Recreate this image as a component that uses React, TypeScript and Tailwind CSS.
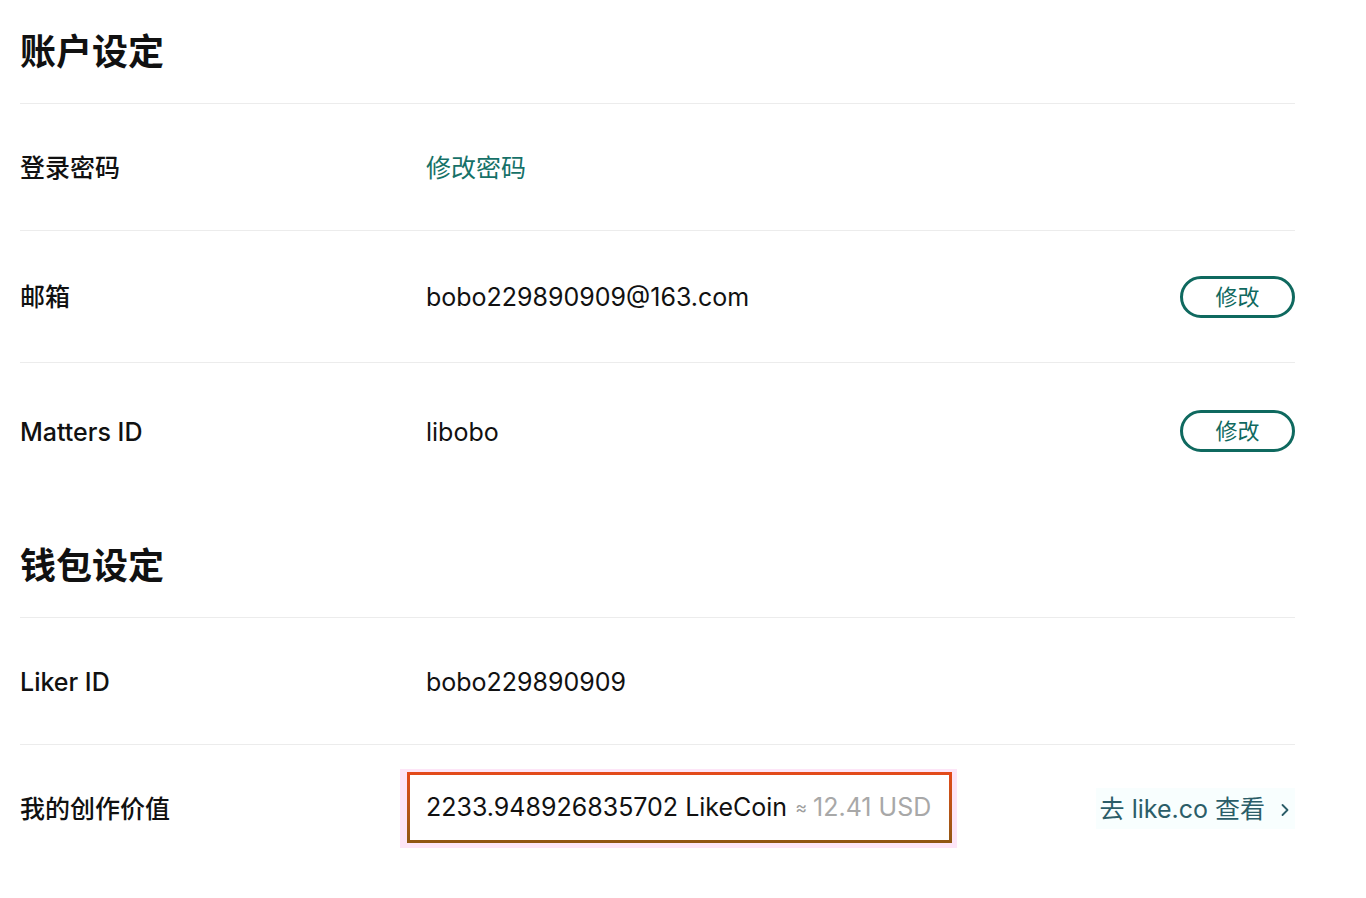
import { ChevronRight } from 'lucide-react';

const font = { fontFamily: 'Inter, "Noto Sans CJK SC", sans-serif' };

function SectionTitle({ children, className = '' }: { children: React.ReactNode; className?: string }) {
  return (
    <div className={`h-[104px] flex items-center border-b border-[#ececec] ${className}`}>
      <h2 className="text-[36px] font-bold text-[#111] leading-none">{children}</h2>
    </div>
  );
}

function EditButton() {
  return (
    <button className="w-[115px] h-[42px] rounded-full border-[3px] border-[#0f695f] text-[#0f695f] text-[22px] leading-none flex items-center justify-center">
      修改
    </button>
  );
}

function Row({
  label,
  children,
  right,
  border = true,
  height = 'h-[127px]',
}: {
  label: string;
  children: React.ReactNode;
  right?: React.ReactNode;
  border?: boolean;
  height?: string;
}) {
  return (
    <div className={`flex items-center ${height} ${border ? 'border-b border-[#ececec]' : ''}`}>
      <div className="w-[406px] shrink-0 text-[25px] font-medium text-[#111] pt-[3px]">{label}</div>
      <div className="flex-1 text-[25px] text-[#111] pt-[3px]">{children}</div>
      {right}
    </div>
  );
}

export default function App() {
  return (
    <div className="bg-white min-h-[898px] w-[1366px]" style={font}>
      <div className="w-[1275px] ml-[20px]">
        <SectionTitle>账户设定</SectionTitle>
        <Row label="登录密码">
          <span className="text-[#167168]">修改密码</span>
        </Row>
        <Row label="邮箱" height="h-[132px]" right={<EditButton />}>
          bobo229890909@163.com
        </Row>
        <Row label="Matters ID" border={false} height="h-[136px]" right={<EditButton />}>
          libobo
        </Row>

        <SectionTitle className="mt-[15px]">钱包设定</SectionTitle>
        <Row label="Liker ID">bobo229890909</Row>
        <Row
          label="我的创作价值"
          border={false}
          right={
            <a className="flex items-center gap-[8px] text-[25px] text-[#2b5d68] bg-[#f8fefe] pl-[4px] pt-[3px]">
              去 like.co 查看
              <ChevronRight size={20} strokeWidth={2.2} className="ml-[2px]" />
            </a>
          }
        >
          <div className="inline-block -ml-[26px] -mt-[3px] bg-[#fde5f7] pl-[7px] pr-[5px] pt-[3px] pb-[5px]">
            <div className="bg-gradient-to-b from-[#e4491a] to-[#8f5712] p-[3px]">
              <div className="bg-white h-[65px] pl-[16px] pr-[18px] flex items-center whitespace-nowrap">
                <span className="text-[#111]">2233.948926835702 LikeCoin</span>
                <span className="text-[#9e9e9e] text-[18px] ml-[8px]">≈</span>
                <span className="text-[#a8a8a8] ml-[6px]">12.41 USD</span>
              </div>
            </div>
          </div>
        </Row>
      </div>
    </div>
  );
}
